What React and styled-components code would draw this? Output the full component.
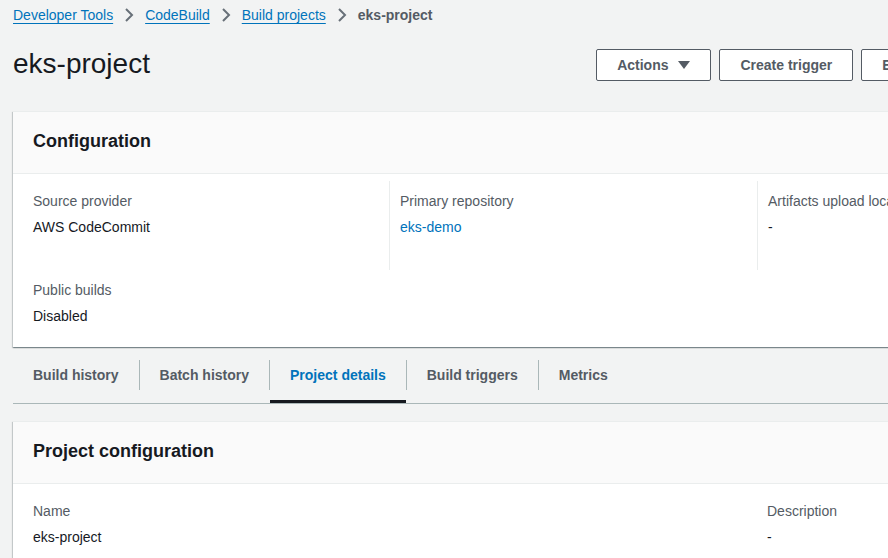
import React from "react";
import styled, { createGlobalStyle } from "styled-components";

const Global = createGlobalStyle`
  html, body {
    margin: 0;
    padding: 0;
    overflow: hidden;
    background: #f2f3f3;
  }
  body {
    font-family: "Liberation Sans", Arial, sans-serif;
    font-size: 14px;
    line-height: 22px;
    color: #16191f;
  }
`;

const Page = styled.div`
  width: 1254px;
  padding: 4px 0 0 13px;
`;

const Crumbs = styled.nav`
  display: flex;
  align-items: center;
  height: 22px;
`;

const CrumbLink = styled.a`
  color: #0073bb;
  text-decoration: underline;
  text-underline-offset: 3px;
  cursor: pointer;
`;

const CrumbCurrent = styled.span`
  color: #545b64;
  font-weight: 700;
`;

const ChevronWrap = styled.span`
  display: inline-flex;
  width: 16px;
  height: 16px;
  margin: 0 8px;
  color: #687078;
`;

const Chevron = () => (
  <ChevronWrap>
    <svg width="16" height="16" viewBox="0 0 16 16" fill="none">
      <path d="M5 2l6 6-6 6" stroke="currentColor" strokeWidth="2" strokeLinejoin="miter" />
    </svg>
  </ChevronWrap>
);

const Header = styled.header`
  display: flex;
  align-items: flex-start;
  justify-content: space-between;
  margin-top: 20px;
`;

const Title = styled.h1`
  margin: 0;
  font-size: 28px;
  line-height: 36px;
  font-weight: 400;
  color: #16191f;
`;

const ButtonGroup = styled.div`
  display: flex;
  gap: 8px;
  margin-top: 3px;
`;

const Button = styled.button`
  display: inline-flex;
  align-items: center;
  height: 32px;
  padding: 0 20px;
  border: 1px solid ${(p) => (p.$primary ? "#ec7211" : "#545b64")};
  border-radius: 2px;
  background: ${(p) => (p.$primary ? "#ec7211" : "#ffffff")};
  color: ${(p) => (p.$primary ? "#ffffff" : "#545b64")};
  font-family: inherit;
  font-size: 14px;
  font-weight: 700;
  line-height: 22px;
  white-space: nowrap;
`;

const Caret = styled.svg`
  margin-left: 10px;
`;

const Card = styled.section`
  margin-top: ${(p) => p.$top}px;
  background: #ffffff;
  border-top: 1px solid #eaeded;
  box-shadow: 0 1px 1px 0 rgba(0, 28, 36, 0.3), 1px 1px 1px 0 rgba(0, 28, 36, 0.15),
    -1px 1px 1px 0 rgba(0, 28, 36, 0.15);
`;

const CardHeader = styled.div`
  background: #fafafa;
  border-bottom: 1px solid #eaeded;
  padding: 18px 20px 21px;
`;

const CardTitle = styled.h2`
  margin: 0;
  font-size: 18px;
  line-height: 22px;
  font-weight: 700;
  color: #16191f;
`;

const CardBody = styled.div`
  display: grid;
  grid-template-columns: ${(p) => p.$cols};
  align-items: start;
  padding: 7px 20px 10px;
`;

const Column = styled.div`
  display: flex;
  flex-direction: column;
  gap: 41px;
  padding: 9px 10px ${(p) => p.$bottom}px;
  border-left: ${(p) => (p.$divider ? "1px solid #eaeded" : "none")};
  &:first-child {
    padding-left: 0;
  }
`;

const Item = styled.div`
  display: flex;
  flex-direction: column;
  gap: 4px;
`;

const Label = styled.div`
  color: #545b64;
`;

const Value = styled.div`
  color: #16191f;
`;

const ValueLink = styled.a`
  color: #0073bb;
  text-decoration: none;
  cursor: pointer;
`;

const TabBar = styled.div`
  display: flex;
  border-bottom: 1px solid #aab7b8;
`;

const Tab = styled.div`
  position: relative;
  padding: 13px 0;
  cursor: pointer;
  &::after {
    content: "";
    position: absolute;
    left: 1px;
    right: 0;
    bottom: 0;
    height: 3px;
    background: ${(p) => (p.$active ? "#16191f" : "transparent")};
  }
`;

const TabLabel = styled.span`
  display: block;
  padding: 0 20px;
  line-height: 30px;
  font-weight: 700;
  color: ${(p) => (p.$active ? "#0073bb" : "#545b64")};
  border-left: ${(p) => (p.$first ? "none" : "1px solid #aab7b8")};
`;

const tabs = ["Build history", "Batch history", "Project details", "Build triggers", "Metrics"];

export default function App() {
  return (
    <>
      <Global />
      <Page>
        <Crumbs>
          <CrumbLink>Developer Tools</CrumbLink>
          <Chevron />
          <CrumbLink>CodeBuild</CrumbLink>
          <Chevron />
          <CrumbLink>Build projects</CrumbLink>
          <Chevron />
          <CrumbCurrent>eks-project</CrumbCurrent>
        </Crumbs>

        <Header>
          <Title>eks-project</Title>
          <ButtonGroup>
            <Button>
              Actions
              <Caret width="12" height="8" viewBox="0 0 12 8">
                <path d="M0 0h12L6 8z" fill="#545b64" />
              </Caret>
            </Button>
            <Button>Create trigger</Button>
            <Button>Edit</Button>
            <Button>Start build with overrides</Button>
            <Button $primary>Start build</Button>
          </ButtonGroup>
        </Header>

        <Card $top={29}>
          <CardHeader>
            <CardTitle>Configuration</CardTitle>
          </CardHeader>
          <CardBody $cols="356px 368px 368px 1fr">
            <Column $bottom={10}>
              <Item>
                <Label>Source provider</Label>
                <Value>AWS CodeCommit</Value>
              </Item>
              <Item>
                <Label>Public builds</Label>
                <Value>Disabled</Value>
              </Item>
            </Column>
            <Column $divider $bottom={32}>
              <Item>
                <Label>Primary repository</Label>
                <ValueLink>eks-demo</ValueLink>
              </Item>
            </Column>
            <Column $divider $bottom={32}>
              <Item>
                <Label>Artifacts upload location</Label>
                <Value>-</Value>
              </Item>
            </Column>
            <Column $divider $bottom={32}>
              <Item>
                <Label>Service role</Label>
                <Value>-</Value>
              </Item>
            </Column>
          </CardBody>
        </Card>

        <TabBar>
          {tabs.map((t, i) => (
            <Tab key={t} $active={t === "Project details"}>
              <TabLabel $first={i === 0} $active={t === "Project details"}>
                {t}
              </TabLabel>
            </Tab>
          ))}
        </TabBar>

        <Card $top={17}>
          <CardHeader>
            <CardTitle>Project configuration</CardTitle>
          </CardHeader>
          <CardBody $cols="724px 1fr">
            <Column $bottom={10}>
              <Item>
                <Label>Name</Label>
                <Value>eks-project</Value>
              </Item>
            </Column>
            <Column $bottom={10}>
              <Item>
                <Label>Description</Label>
                <Value>-</Value>
              </Item>
            </Column>
          </CardBody>
        </Card>
      </Page>
    </>
  );
}
